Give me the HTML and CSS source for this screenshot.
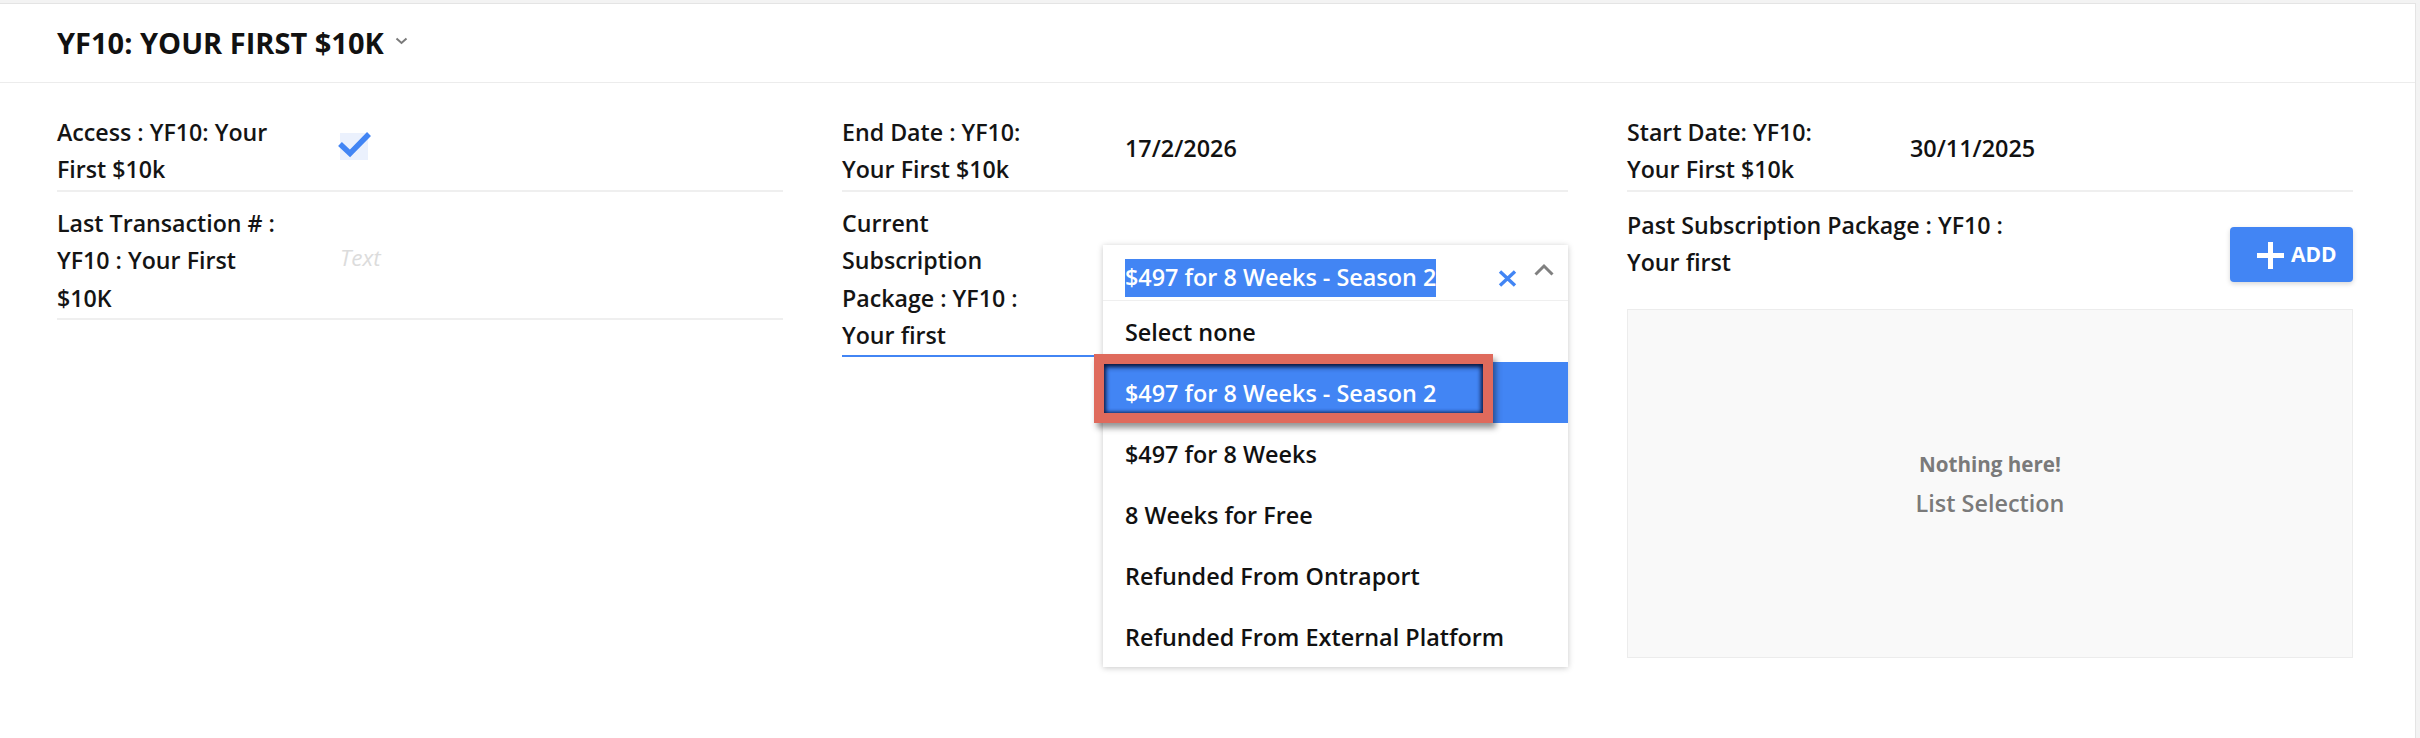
FILE: index.html
```html
<!DOCTYPE html>
<html lang="en">
<head>
<meta charset="utf-8">
<title>YF10: Your First $10K</title>
<link rel="stylesheet" href="styles.css">
</head>
<body>
<div class="card">
  <header class="card-header">
    <h1 class="title">YF10: YOUR FIRST $10K</h1>
    <svg class="title-caret" width="13" height="8" viewBox="0 0 13 8"><polyline points="1.5,1.5 6.5,6 11.5,1.5" fill="none" stroke="#7a7a7a" stroke-width="2"/></svg>
  </header>

  <div class="fields">
    <!-- Column 1 -->
    <div class="col">
      <div class="row">
        <div class="label">Access : YF10: Your First $10k</div>
        <div class="value value-check">
          <span class="checkbox">
            <svg class="checkmark" width="34" height="28" viewBox="0 0 34 28"><polyline points="3,13 13,22.5 32,3" fill="none" stroke="#4285f4" stroke-width="5.5"/></svg>
          </span>
        </div>
      </div>
      <div class="row">
        <div class="label">Last Transaction # : YF10 : Your First $10K</div>
        <div class="value placeholder">Text</div>
      </div>
    </div>

    <!-- Column 2 -->
    <div class="col">
      <div class="row">
        <div class="label">End Date : YF10: Your First $10k</div>
        <div class="value">17/2/2026</div>
      </div>
      <div class="row row-focused">
        <div class="label">Current Subscription Package : YF10 : Your first</div>
        <div class="value value-select">
          <div class="dropdown">
            <div class="dropdown-input">
              <span class="selected-text">$497 for 8 Weeks - Season 2</span>
              <svg class="clear-icon" width="19" height="17" viewBox="0 0 19 17"><path d="M2,1.5 L17,15.5 M17,1.5 L2,15.5" stroke="#4285f4" stroke-width="3.4" fill="none"/></svg>
              <svg class="up-icon" width="20" height="13" viewBox="0 0 20 13"><polyline points="1.5,11.5 10,3 18.5,11.5" fill="none" stroke="#808080" stroke-width="3"/></svg>
            </div>
            <ul class="options">
              <li class="option">Select none</li>
              <li class="option option-active">$497 for 8 Weeks - Season 2</li>
              <li class="option">$497 for 8 Weeks</li>
              <li class="option">8 Weeks for Free</li>
              <li class="option">Refunded From Ontraport</li>
              <li class="option">Refunded From External Platform</li>
            </ul>
            <div class="annotation"></div>
          </div>
        </div>
      </div>
    </div>

    <!-- Column 3 -->
    <div class="col">
      <div class="row">
        <div class="label">Start Date: YF10: Your First $10k</div>
        <div class="value">30/11/2025</div>
      </div>
      <div class="list-field">
        <div class="list-head">
          <div class="list-label">Past Subscription Package : YF10 : Your first</div>
          <button class="add-btn" type="button">
            <svg width="27" height="27" viewBox="0 0 27 27"><path d="M13.5,0 V27 M0,13.5 H27" stroke="#ffffff" stroke-width="5"/></svg>
            <span>ADD</span>
          </button>
        </div>
        <div class="empty-box">
          <div class="empty-title">Nothing here!</div>
          <div class="empty-sub">List Selection</div>
        </div>
      </div>
    </div>
  </div>
</div>
</body>
</html>
```

FILE: styles.css
```css
* { box-sizing: border-box; }

html, body {
  margin: 0;
  padding: 0;
}

body {
  background: #f3f3f3;
  font-family: "Open Sans", "Liberation Sans", sans-serif;
  color: #141414;
}

.card {
  margin-top: 3px;
  width: 2416px;
  min-height: 735px;
  background: #ffffff;
  border-top: 1px solid #e4e4e4;
  border-right: 1px solid #e4e4e4;
}

.card-header {
  height: 79px;
  display: flex;
  align-items: center;
  padding-left: 57px;
  border-bottom: 1px solid #ececec;
}

.title {
  margin: 0;
  font-size: 29px;
  line-height: 40px;
  font-weight: 700;
  color: #111111;
}

.title-caret {
  margin-left: 11px;
  margin-bottom: 4px;
}

.fields {
  display: grid;
  grid-template-columns: repeat(3, 726px);
  column-gap: 59px;
  padding: 18px 0 0 57px;
  align-items: start;
}

.col {
  display: flex;
  flex-direction: column;
}

.row {
  display: grid;
  grid-template-columns: 227px 1fr;
  column-gap: 56px;
  padding: 13px 0 1px;
  border-bottom: 2px solid #efefef;
  align-items: center;
}

.row-focused {
  border-bottom-color: #4285f4;
}

.label {
  font-size: 23.2px;
  font-weight: 600;
  line-height: 37.4px;
}

.value {
  font-size: 23.4px;
  font-weight: 600;
  line-height: 34px;
  margin-bottom: 6px;
  color: #111111;
}

.placeholder {
  font-size: 22.5px;
  font-weight: 400;
  font-style: italic;
  color: #dcdcdc;
}

.value-check {
  margin-bottom: 10px;
  line-height: 0;
}

.checkbox {
  display: inline-block;
  position: relative;
  width: 28px;
  height: 27px;
  background: #ebf1fd;
}

.checkmark {
  position: absolute;
  left: -3px;
  top: -2px;
  overflow: visible;
}

/* dropdown */
.value-select {
  align-self: stretch;
  position: relative;
  margin: 0;
}

.dropdown {
  position: absolute;
  left: -22px;
  right: 0;
  top: 40.4px;
  background: #ffffff;
  box-shadow: 0 1px 6px rgba(0, 0, 0, 0.22);
  z-index: 5;
}

.dropdown-input {
  height: 56px;
  display: flex;
  align-items: flex-start;
  padding: 14px 14px 0 22px;
  border-bottom: 1px solid #efefef;
}

.selected-text {
  display: inline-block;
  background: #4285f4;
  color: #ffffff;
  font-size: 23.4px;
  font-weight: 600;
  line-height: 37.7px;
  white-space: nowrap;
}

.clear-icon {
  margin-left: auto;
  margin-top: 11px;
}

.up-icon {
  margin-left: 17px;
  margin-top: 3.5px;
}

.options {
  list-style: none;
  margin: 0;
  padding: 0;
}

.option {
  height: 61px;
  display: flex;
  align-items: center;
  padding-left: 22px;
  font-size: 23.4px;
  font-weight: 600;
  line-height: 34px;
  color: #111111;
  white-space: nowrap;
}

.option-active {
  background: #4285f4;
  color: #ffffff;
}

.annotation {
  position: absolute;
  left: -8.7px;
  top: 108.3px;
  width: 398.3px;
  height: 69.3px;
  border: 10px solid #df6a5c;
  box-shadow: 3px 5px 6px rgba(0, 0, 0, 0.42), inset 0 3px 5px rgba(8, 22, 60, 0.9), inset 2px 0 4px rgba(8, 22, 60, 0.7), inset -2px 0 4px rgba(8, 22, 60, 0.7);
  pointer-events: none;
}

/* list field */
.list-field {
  padding-top: 15.5px;
}

.list-head {
  display: flex;
  justify-content: space-between;
  align-items: flex-start;
}

.list-label {
  max-width: 405px;
  font-size: 23.2px;
  font-weight: 600;
  line-height: 37px;
}

.add-btn {
  margin-top: 19.5px;
  width: 123px;
  height: 55px;
  display: flex;
  align-items: center;
  gap: 7px;
  padding: 0 0 0 27px;
  border: none;
  border-radius: 4px;
  background: #4285f4;
  color: #ffffff;
  box-shadow: 0 2px 5px rgba(0, 0, 0, 0.16);
  font-family: "Open Sans", "Liberation Sans", sans-serif;
  font-size: 21px;
  font-weight: 700;
  line-height: 1;
}

.add-btn svg {
  flex: none;
  margin-top: 2px;
}

.empty-box {
  margin-top: 27.5px;
  height: 349px;
  background: #f9f9f9;
  border: 1px solid #ececec;
  display: flex;
  flex-direction: column;
  align-items: center;
  justify-content: center;
  color: #7a7a7a;
  line-height: 39px;
}

.empty-title {
  font-size: 20.6px;
  font-weight: 700;
}

.empty-sub {
  font-size: 23.4px;
  font-weight: 600;
}
```
